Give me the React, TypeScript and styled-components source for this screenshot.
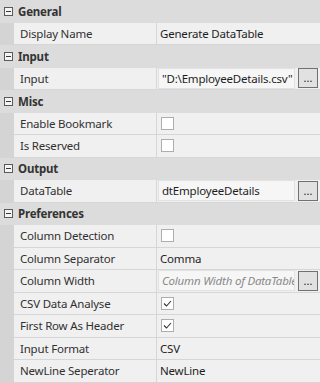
import React from "react";
import styled, { createGlobalStyle } from "styled-components";

const Global = createGlobalStyle`
  html, body { margin: 0; padding: 0; background: #f0f0f0; }
  * { box-sizing: border-box; }
`;

const Grid = styled.div`
  width: 320px;
  height: 383px;
  overflow: hidden;
  background: #d4d4d4;
  font-family: "Noto Sans", "Open Sans", sans-serif;
  font-size: 11.5px;
  letter-spacing: -0.2px;
  color: #1e1e1e;
`;

const Header = styled.div`
  display: grid;
  grid-template-columns: 14px 1fr;
  height: 22.5px;
  align-items: center;
  background: #dcdcdc;
`;

const Expander = styled.span`
  justify-self: center;
  width: 9px;
  height: 9px;
  border: 1px solid #5a5a5a;
  position: relative;
  background: #f4f4f4;
  margin-left: 2px;
  &::after {
    content: "";
    position: absolute;
    left: 1px;
    right: 1px;
    top: 3px;
    height: 1px;
    background: #3a3a3a;
  }
`;

const HeaderText = styled.span`
  font-weight: 700;
  color: #333;
  padding-left: 4px;
`;

const Row = styled.div`
  display: grid;
  grid-template-columns: 14px 143px 1fr;
  height: 22.5px;
`;

const Gutter = styled.div``;

const NameCell = styled.div`
  display: flex;
  align-items: center;
  padding-left: 6px;
  background: #f0f0f0;
  border-right: 1px solid #d6d6d6;
  border-bottom: 1px solid #d6d6d6;
  color: #303030;
  white-space: nowrap;
  overflow: hidden;
`;

const ValueCell = styled.div`
  display: flex;
  align-items: center;
  gap: 3px;
  padding: 0 2px 0 3px;
  background: #f0f0f0;
  border-bottom: 1px solid #d6d6d6;
  white-space: nowrap;
  overflow: hidden;
  min-width: 0;
`;

const ValueText = styled.span`
  color: #1e1e1e;
`;

const Field = styled.div<{ $placeholder?: boolean }>`
  flex: 1;
  min-width: 0;
  height: 21px;
  display: flex;
  align-items: center;
  padding-left: 3px;
  margin-left: -2px;
  background: #f6f6f6;
  border: 1px solid #e2e2e2;
  overflow: hidden;
  white-space: nowrap;
  color: ${(p) => (p.$placeholder ? "#8a8a8a" : "#1e1e1e")};
  font-style: ${(p) => (p.$placeholder ? "italic" : "normal")};
`;

const DotsButton = styled.button`
  flex: none;
  width: 20px;
  height: 20px;
  padding: 0 0 4px;
  border: 1px solid #707070;
  background: #e1e1e1;
  font-family: "Noto Sans", sans-serif;
  font-size: 11px;
  line-height: 1;
  color: #1e1e1e;
  display: flex;
  align-items: flex-end;
  justify-content: center;
`;

const Check = styled.span`
  width: 13px;
  height: 13px;
  background: #fff;
  border: 1px solid #adadad;
  display: flex;
  align-items: center;
  justify-content: center;
  margin-left: 1px;
`;

type Prop =
  | { name: string; kind: "text"; value: string }
  | { name: string; kind: "check"; checked: boolean }
  | { name: string; kind: "button"; value: string; placeholder?: boolean };

const categories: { title: string; props: Prop[] }[] = [
  { title: "General", props: [{ name: "Display Name", kind: "text", value: "Generate DataTable" }] },
  { title: "Input", props: [{ name: "Input", kind: "button", value: "\"D:\\EmployeeDetails.csv\"" }] },
  {
    title: "Misc",
    props: [
      { name: "Enable Bookmark", kind: "check", checked: false },
      { name: "Is Reserved", kind: "check", checked: false },
    ],
  },
  { title: "Output", props: [{ name: "DataTable", kind: "button", value: "dtEmployeeDetails" }] },
  {
    title: "Preferences",
    props: [
      { name: "Column Detection", kind: "check", checked: false },
      { name: "Column Separator", kind: "text", value: "Comma" },
      { name: "Column Width", kind: "button", value: "Column Width of DataTable", placeholder: true },
      { name: "CSV Data Analyse", kind: "check", checked: true },
      { name: "First Row As Header", kind: "check", checked: true },
      { name: "Input Format", kind: "text", value: "CSV" },
      { name: "NewLine Seperator", kind: "text", value: "NewLine" },
    ],
  },
];

const CheckMark = () => (
  <svg width="9" height="7" viewBox="0 0 9 7">
    <path d="M1 3.5 L3.5 6 L8 1" fill="none" stroke="#333" strokeWidth="1.1" />
  </svg>
);

function Value({ p }: { p: Prop }) {
  if (p.kind === "text") return <ValueText>{p.value}</ValueText>;
  if (p.kind === "check") return <Check>{p.checked && <CheckMark />}</Check>;
  return (
    <>
      <Field $placeholder={p.placeholder}>{p.value}</Field>
      <DotsButton>...</DotsButton>
    </>
  );
}

export default function App() {
  return (
    <>
      <Global />
      <Grid>
        {categories.map((c) => (
          <React.Fragment key={c.title}>
            <Header>
              <Expander />
              <HeaderText>{c.title}</HeaderText>
            </Header>
            {c.props.map((p) => (
              <Row key={p.name}>
                <Gutter />
                <NameCell>{p.name}</NameCell>
                <ValueCell>
                  <Value p={p} />
                </ValueCell>
              </Row>
            ))}
          </React.Fragment>
        ))}
      </Grid>
    </>
  );
}
